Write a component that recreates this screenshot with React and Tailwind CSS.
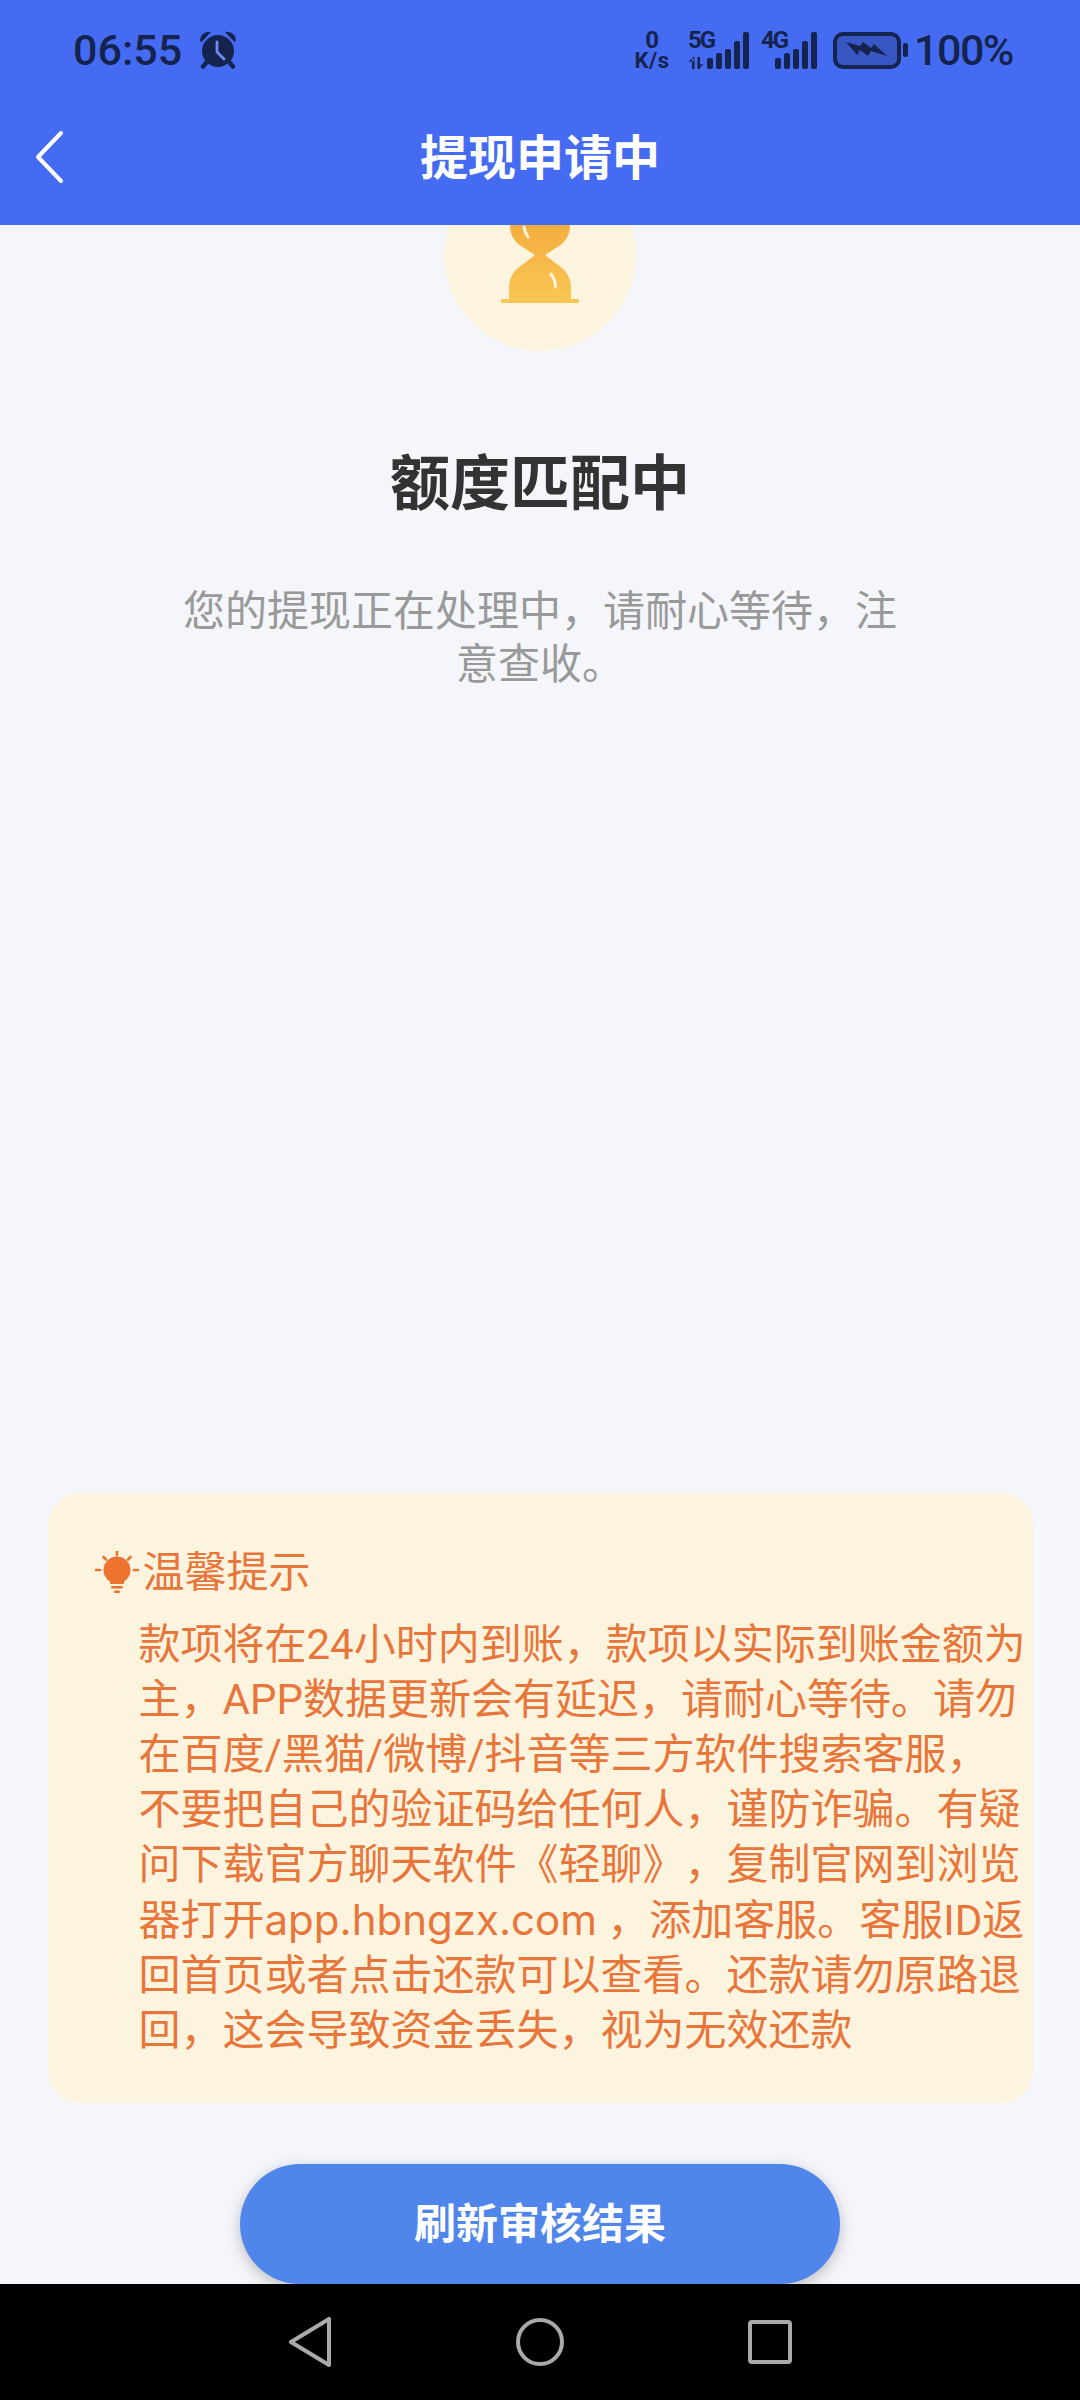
import React from 'react';

const cjk = 'font-[Roboto,"Noto_Sans_CJK_SC",sans-serif]';

const tipLines = [
    '款项将在24小时内到账，款项以实际到账金额为',
    '主，APP数据更新会有延迟，请耐心等待。请勿',
    '在百度/黑猫/微博/抖音等三方软件搜索客服，',
    '不要把自己的验证码给任何人，谨防诈骗。有疑',
    '问下载官方聊天软件《轻聊》，复制官网到浏览',
    <>器打开<span className="font-[Inter,sans-serif]">app.hbngzx.com</span> ，添加客服。客服ID返</>,
    '回首页或者点击还款可以查看。还款请勿原路退',
    '回，这会导致资金丢失，视为无效还款',
];

const Bars = () => (
    <div className="flex items-end gap-[3px] h-[37px]">
        {[11, 16, 20, 28, 37].map((h, i) => (
            <div key={i} className="w-[6px] rounded-[2px] bg-[#14244f]" style={{ height: h }} />
        ))}
    </div>
);

const StatusBar = () => (
    <div className="h-[100px] flex items-center justify-between pl-[73px] pr-[67px] text-[#14244f]">
        <div className="flex items-center gap-[17px]">
            <span className="font-[Roboto,sans-serif] font-medium text-[43px] leading-none">06:55</span>
            <svg width="38" height="38" viewBox="0 0 38 38" fill="#14244f">
                <path d="M1 10 C1 4 6 0 12 1 L2.5 11 Z M37 10 C37 4 32 0 26 1 L35.5 11 Z" />
                <circle cx="19" cy="20" r="16" />
                <path d="M7 32 L4 35.5 M31 32 L34 35.5" stroke="#14244f" strokeWidth="4.5" strokeLinecap="round" />
                <path d="M18 11 V21 L25 28" fill="none" stroke="#6f8cf0" strokeWidth="2.8" strokeLinecap="round" strokeLinejoin="round" />
            </svg>
        </div>
        <div className="flex items-center">
            <div className="w-[40px] flex flex-col items-center font-[Roboto,sans-serif] font-bold">
                <span className="text-[24px] leading-[21px]">0</span>
                <span className="text-[22px] leading-[20px] tracking-[0.5px]">K/s</span>
            </div>
            <div className="ml-[16px] relative w-[61px] h-[37px] flex justify-end">
                <span className="absolute left-0 top-[-4px] font-[Roboto,sans-serif] font-bold text-[24px] leading-[24px] tracking-[-2px]">5G</span>
                <svg className="absolute left-0 bottom-0" width="16" height="12" viewBox="0 0 16 12" fill="#14244f">
                    <path d="M4 0 V12 H6.5 V0 Z M0.5 5 L5 0 L6 4 Z M9.5 12 V0 H12 V12 Z M15.5 7 L11 12 L10 8 Z" />
                </svg>
                <Bars />
            </div>
            <div className="ml-[12px] relative w-[56px] h-[37px] flex justify-end">
                <span className="absolute left-0 top-[-4px] font-[Roboto,sans-serif] font-bold text-[24px] leading-[24px] tracking-[-2px]">4G</span>
                <Bars />
            </div>
            <div className="ml-[16px] w-[68px] h-[37px] rounded-[10px] border-[4px] border-[#14244f] bg-[#3957c4] flex items-center justify-center">
                <svg width="42" height="18" viewBox="0 0 42 18" fill="#14244f">
                    <path d="M0 1 L14 5 L17 1 L25 7 L28 3 L41 15 L25 10 L22 15 L14 9 L11 14 Z" />
                </svg>
            </div>
            <div className="ml-[2px] w-[5px] h-[14px] rounded-[2px] bg-[#14244f]" />
            <span className="ml-[6px] font-[Roboto,sans-serif] font-medium text-[43px] leading-none tracking-[-1.5px]">100%</span>
        </div>
    </div>
);

const Hourglass = () => (
    <svg width="192" height="192" viewBox="0 0 192 192">
        <defs>
            <linearGradient id="sand" x1="0" y1="0" x2="0" y2="1">
                <stop offset="0" stopColor="#f1a236" />
                <stop offset="1" stopColor="#f9c653" />
            </linearGradient>
        </defs>
        <path d="M66 30 H126 V66 C126 74 123 80 118 85 L101 96 L118 109 C125 115 127 122 127 130 V141 H65 V130 C65 122 67 115 74 109 L91 96 L74 85 C69 80 66 74 66 66 Z" fill="url(#sand)" />
        <rect x="57" y="140" width="78" height="4" rx="1" fill="#f9c653" />
        <path d="M80 68 C80.5 72 82 75 84 78 M107 115 C110 119 111.5 123 111.5 128" fill="none" stroke="#fdf4df" strokeWidth="3" strokeLinecap="round" />
    </svg>
);

const Bulb = () => (
    <svg width="44" height="44" viewBox="0 0 44 44" fill="#ec7330">
        <circle cx="22" cy="19" r="13.5" />
        <path d="M15 29 H29 V33 H15 Z" />
        <rect x="16" y="35" width="12" height="2.5" rx="1" />
        <rect x="19" y="39.5" width="6" height="2.5" rx="1" />
        <path d="M22 0.5 V4 M8.5 6 L11 8.5 M35.5 6 L33 8.5 M1 19 H5 M39 19 H43" stroke="#ec7330" strokeWidth="2.6" strokeLinecap="round" />
    </svg>
);

const NavBar = () => (
    <div className="h-[116px] bg-black relative z-10 flex items-start justify-center pt-[33px]">
        <div className="w-[504px] flex items-center justify-between">
            <svg width="44" height="50" viewBox="0 0 44 50" fill="none" stroke="#aaaaaa" strokeWidth="4" strokeLinejoin="round">
                <path d="M41 2 V48 L3 25 Z" />
            </svg>
            <svg width="48" height="50" viewBox="0 0 48 50" fill="none" stroke="#aaaaaa" strokeWidth="4">
                <circle cx="24" cy="25" r="22" />
            </svg>
            <svg width="44" height="44" viewBox="0 0 44 44" fill="none" stroke="#aaaaaa" strokeWidth="4" strokeLinejoin="round">
                <rect x="2" y="2" width="40" height="40" rx="2" />
            </svg>
        </div>
    </div>
);

const App = () => {
    return (
        <div className={`w-[1080px] h-[2400px] overflow-hidden flex flex-col bg-[#f4f6fb] [text-spacing-trim:space-all] ${cjk}`}>
            {/* Header */}
            <div className="h-[225px] shrink-0 bg-[#466bf3] relative z-10">
                <StatusBar />
                <div className="relative h-[125px] flex items-center justify-center pb-[8px]">
                    <svg className="absolute left-[34px] top-[30px]" width="32" height="54" viewBox="0 0 32 54" fill="none" stroke="#ffffff" strokeWidth="4" strokeLinecap="round" strokeLinejoin="round">
                        <path d="M27 3 L4 27 L27 51" />
                    </svg>
                    <h1 className="text-[48px] font-bold text-white leading-none">提现申请中</h1>
                </div>
            </div>

            {/* Body */}
            <div className="flex-1 min-h-0 flex flex-col items-center">
                <div className="-mt-[66px] w-[192px] h-[192px] shrink-0 rounded-full bg-[#fdf4df]">
                    <Hourglass />
                </div>
                <h2 className="mt-[91px] text-[60px] leading-[86px] font-bold text-[#333333]">额度匹配中</h2>
                <p className="mt-[57px] w-[730px] text-center text-[42px] leading-[53px] text-[#999999]">
                    您的提现正在处理中，请耐心等待，注意查收。
                </p>

                <div className="mt-auto w-[985px] h-[610px] shrink-0 rounded-[32px] bg-[#fdf4df] pt-[57px] pl-[47px] text-[#e8763a]">
                    <div className="flex items-center gap-[4px] h-[46px]">
                        <Bulb />
                        <span className="text-[42px] leading-none">温馨提示</span>
                    </div>
                    <div className="mt-[21px] pl-[44px] text-[42px] leading-[55px]">
                        {tipLines.map((line, i) => (
                            <div key={i} className="whitespace-nowrap">{line}</div>
                        ))}
                    </div>
                </div>

                <button className="mt-[61px] w-[600px] h-[120px] shrink-0 rounded-full bg-[#5085ec] shadow-[0_4px_14px_rgba(80,80,80,0.35)] text-white text-[42px] font-bold">
                    刷新审核结果
                </button>
            </div>

            <NavBar />
        </div>
    );
};

export default App;
